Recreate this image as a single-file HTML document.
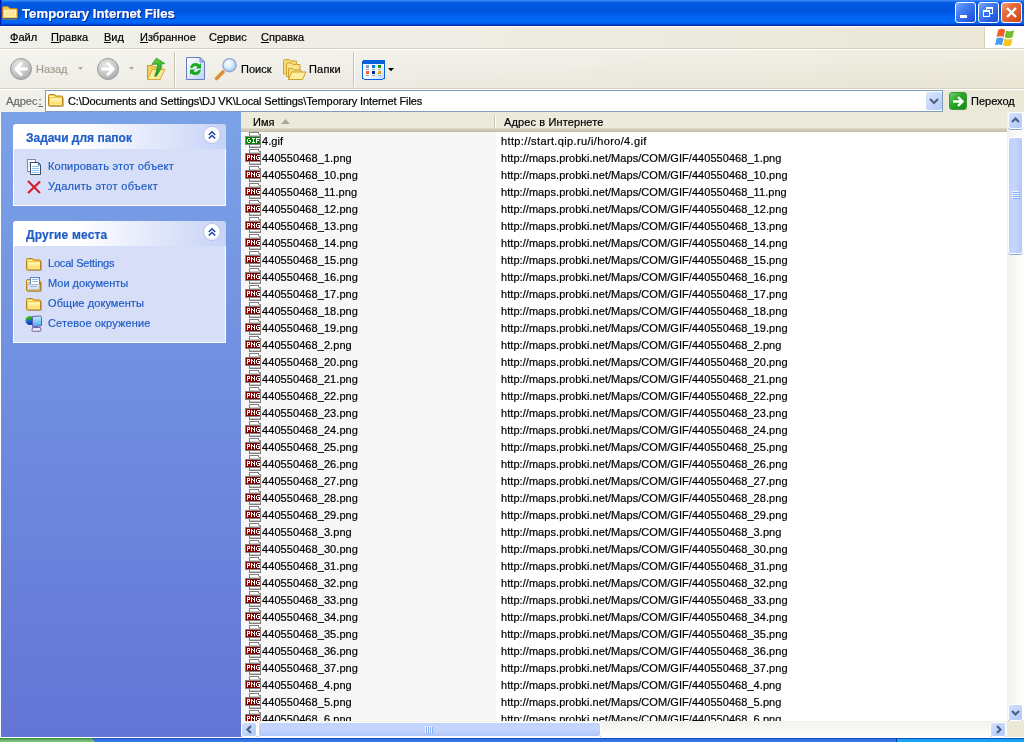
<!DOCTYPE html><html><head><meta charset="utf-8"><style>
*{margin:0;padding:0;box-sizing:border-box}
html,body{width:1024px;height:742px;overflow:hidden;background:#ece9d8;font-family:"Liberation Sans",sans-serif;font-size:11px;color:#000}
#root span{-webkit-text-stroke:0.2px currentColor}
#root{position:absolute;left:0;top:0;width:1024px;height:742px;will-change:transform}
.a{position:absolute;white-space:nowrap}
svg{position:absolute;overflow:visible}
#title{left:0;top:0;width:1024px;height:26px;background:linear-gradient(#3d8ef8 0,#2f84f4 1px,#0a62ea 2px,#0058e2 4px,#0055de 12px,#005ae8 14px,#0064f4 17px,#0068f8 21px,#0062f2 23px,#0050dc 24px,#0036b8 25px,#0030a8 26px)}
.tt{left:22px;top:6px;color:#fff;font-weight:bold;font-size:13.2px;text-shadow:1px 1px 0 #0a1e80}
.tb{top:2px;width:21px;height:21px;border:1px solid #fff;border-radius:3px;background:linear-gradient(135deg,#7aa8fa 0,#4a84f2 30%,#2c66e8 65%,#1a4cd4 100%)}
#close{background:linear-gradient(135deg,#f4a282 0,#e8703f 30%,#de5a28 65%,#c64614 100%)}
.hg{background:linear-gradient(90deg,#f1f0ea 0,#eeece3 50%,#ebe8d8 100%)}
#menu{left:0;top:26px;width:984px;height:22px}
#menu span{position:absolute;top:7px}
#menu u{text-decoration:none;display:inline-block;border-bottom:1px solid #000;line-height:10px;height:11px}
#winlogo{left:984px;top:26px;width:40px;height:23px;background:#fff;border-left:1px solid #d6d0be}
#toolbar{left:0;top:48px;width:1024px;height:41px}
#addr{left:0;top:88px;width:1024px;height:24px}
#addrbox{left:45px;top:90px;width:898px;height:22px;background:#fff;border:1px solid #7f9db9}
#left{left:0;top:112px;width:241px;height:625px;background:linear-gradient(#7ba2e7,#6375d6)}
.box{left:13px;width:213px;background:#d6dff7;border:1px solid #fff;border-top:none}
.boxh{left:13px;width:213px;height:25px;border-radius:3px 3px 0 0;background:linear-gradient(90deg,#fff 0,#fff 30%,#c6d3f7 100%)}
.boxh span{position:absolute;left:13px;top:7px;font-weight:bold;color:#215dc6;font-size:12px}
.chev{left:191px;top:3px;width:16px;height:16px;border-radius:50%;background:radial-gradient(circle at 45% 40%,#fff 50%,#eef1fa 70%,#d8ddf0 100%);box-shadow:0 0 0 1px #b8c2e2}
.lnk{color:#215dc6}
#list{left:241px;top:112px;width:766px;height:609px;background:#fff}
#sortcol{left:241px;top:131px;width:255px;height:590px;background:#f7f7f7}
#hdr{left:241px;top:112px;width:766px;height:20px;background:linear-gradient(#ebeadb 0,#ebeadb 16px,#dedbca 16px,#d6d2c0 17px,#cdc9b5 18px,#c5c1ac 19px,#c5c1ac 20px)}
#vsb{left:1007px;top:112px;width:17px;height:609px;background:linear-gradient(90deg,#f3f1ec,#fefefb)}
.sbtn{border:1px solid #fff;border-radius:3px;background:linear-gradient(135deg,#d4e0fd 0,#c2d4fc 50%,#b0c8f9 100%);box-shadow:0 1px 0 #8ca8dc}
.thumbv{border:1px solid #fff;border-radius:3px;box-shadow:0 1px 0 #8ca8dc}
#hsb{left:241px;top:721px;width:766px;height:16px;background:linear-gradient(#f3f1ec,#fefefb)}
</style></head><body><div id="root">
<svg width="0" height="0" style="left:0;top:0"><defs><linearGradient id="fgb" x1="0" y1="0" x2="0" y2="1"><stop offset="0" stop-color="#fff4b8"/><stop offset="1" stop-color="#f2c95a"/></linearGradient>
<linearGradient id="fgf" x1="0" y1="0" x2="0" y2="1"><stop offset="0" stop-color="#fff8c0"/><stop offset="1" stop-color="#fcd860"/></linearGradient>
<radialGradient id="gc" cx="0.4" cy="0.3" r="0.8"><stop offset="0" stop-color="#e6e6e6"/><stop offset="0.55" stop-color="#c8c8c8"/><stop offset="1" stop-color="#a2a2a2"/></radialGradient>
<linearGradient id="rp" x1="0" y1="0" x2="1" y2="1"><stop offset="0" stop-color="#fff"/><stop offset="1" stop-color="#bcd4f6"/></linearGradient>
<radialGradient id="mg" cx="0.4" cy="0.35" r="0.7"><stop offset="0" stop-color="#fff"/><stop offset="0.5" stop-color="#d6ecfc"/><stop offset="1" stop-color="#92c4ec"/></radialGradient>
<linearGradient id="vg" x1="0" y1="0" x2="1" y2="1"><stop offset="0" stop-color="#fff"/><stop offset="0.6" stop-color="#f2f7ff"/><stop offset="1" stop-color="#b8d6fa"/></linearGradient>
<linearGradient id="ga" x1="0" y1="0" x2="0" y2="1"><stop offset="0" stop-color="#5ccc3c"/><stop offset="1" stop-color="#1a9a1a"/></linearGradient><symbol id="gif" viewBox="0 0 16 16" shape-rendering="crispEdges"><rect x="4" y="0" width="10" height="1" fill="#808080"/><rect x="13" y="1" width="1" height="1" fill="#808080"/><rect x="14" y="2" width="1" height="1" fill="#808080"/><rect x="15" y="2" width="1" height="14" fill="#808080"/><rect x="4" y="15" width="12" height="1" fill="#808080"/><rect x="4" y="0" width="1" height="16" fill="#808080"/><rect x="5" y="1" width="8" height="3" fill="#fff"/><rect x="13" y="2" width="1" height="2" fill="#e0e0e0"/><rect x="14" y="3" width="1" height="1" fill="#c8c8c8"/><rect x="5" y="3" width="10" height="1" fill="#c8c8c8"/><rect x="5" y="13" width="10" height="1" fill="#fff"/><rect x="5" y="14" width="10" height="1" fill="#c8c8c8"/><rect x="0" y="4" width="16" height="9" fill="#868686"/><rect x="1" y="5" width="14" height="7" fill="#008000"/><rect x="3" y="6" width="1" height="1" fill="#fff"/><rect x="4" y="6" width="1" height="1" fill="#fff"/><rect x="2" y="7" width="1" height="1" fill="#fff"/><rect x="2" y="8" width="1" height="1" fill="#fff"/><rect x="4" y="8" width="1" height="1" fill="#fff"/><rect x="5" y="8" width="1" height="1" fill="#fff"/><rect x="2" y="9" width="1" height="1" fill="#fff"/><rect x="5" y="9" width="1" height="1" fill="#fff"/><rect x="3" y="10" width="1" height="1" fill="#fff"/><rect x="4" y="10" width="1" height="1" fill="#fff"/><rect x="7" y="6" width="1" height="1" fill="#fff"/><rect x="8" y="6" width="1" height="1" fill="#fff"/><rect x="9" y="6" width="1" height="1" fill="#fff"/><rect x="8" y="7" width="1" height="1" fill="#fff"/><rect x="8" y="8" width="1" height="1" fill="#fff"/><rect x="8" y="9" width="1" height="1" fill="#fff"/><rect x="7" y="10" width="1" height="1" fill="#fff"/><rect x="8" y="10" width="1" height="1" fill="#fff"/><rect x="9" y="10" width="1" height="1" fill="#fff"/><rect x="11" y="6" width="1" height="1" fill="#fff"/><rect x="12" y="6" width="1" height="1" fill="#fff"/><rect x="13" y="6" width="1" height="1" fill="#fff"/><rect x="14" y="6" width="1" height="1" fill="#fff"/><rect x="11" y="7" width="1" height="1" fill="#fff"/><rect x="11" y="8" width="1" height="1" fill="#fff"/><rect x="12" y="8" width="1" height="1" fill="#fff"/><rect x="13" y="8" width="1" height="1" fill="#fff"/><rect x="11" y="9" width="1" height="1" fill="#fff"/><rect x="11" y="10" width="1" height="1" fill="#fff"/></symbol><symbol id="png" viewBox="0 0 16 16" shape-rendering="crispEdges"><rect x="4" y="0" width="10" height="1" fill="#808080"/><rect x="13" y="1" width="1" height="1" fill="#808080"/><rect x="14" y="2" width="1" height="1" fill="#808080"/><rect x="15" y="2" width="1" height="14" fill="#808080"/><rect x="4" y="15" width="12" height="1" fill="#808080"/><rect x="4" y="0" width="1" height="16" fill="#808080"/><rect x="5" y="1" width="8" height="3" fill="#fff"/><rect x="13" y="2" width="1" height="2" fill="#e0e0e0"/><rect x="14" y="3" width="1" height="1" fill="#c8c8c8"/><rect x="5" y="3" width="10" height="1" fill="#c8c8c8"/><rect x="5" y="13" width="10" height="1" fill="#fff"/><rect x="5" y="14" width="10" height="1" fill="#c8c8c8"/><rect x="0" y="4" width="16" height="9" fill="#868686"/><rect x="1" y="5" width="14" height="7" fill="#800000"/><rect x="2" y="6" width="1" height="1" fill="#fff"/><rect x="3" y="6" width="1" height="1" fill="#fff"/><rect x="4" y="6" width="1" height="1" fill="#fff"/><rect x="2" y="7" width="1" height="1" fill="#fff"/><rect x="4" y="7" width="1" height="1" fill="#fff"/><rect x="2" y="8" width="1" height="1" fill="#fff"/><rect x="3" y="8" width="1" height="1" fill="#fff"/><rect x="4" y="8" width="1" height="1" fill="#fff"/><rect x="2" y="9" width="1" height="1" fill="#fff"/><rect x="2" y="10" width="1" height="1" fill="#fff"/><rect x="6" y="6" width="1" height="1" fill="#fff"/><rect x="9" y="6" width="1" height="1" fill="#fff"/><rect x="6" y="7" width="1" height="1" fill="#fff"/><rect x="7" y="7" width="1" height="1" fill="#fff"/><rect x="9" y="7" width="1" height="1" fill="#fff"/><rect x="6" y="8" width="1" height="1" fill="#fff"/><rect x="8" y="8" width="1" height="1" fill="#fff"/><rect x="9" y="8" width="1" height="1" fill="#fff"/><rect x="6" y="9" width="1" height="1" fill="#fff"/><rect x="9" y="9" width="1" height="1" fill="#fff"/><rect x="6" y="10" width="1" height="1" fill="#fff"/><rect x="9" y="10" width="1" height="1" fill="#fff"/><rect x="12" y="6" width="1" height="1" fill="#fff"/><rect x="13" y="6" width="1" height="1" fill="#fff"/><rect x="14" y="6" width="1" height="1" fill="#fff"/><rect x="11" y="7" width="1" height="1" fill="#fff"/><rect x="11" y="8" width="1" height="1" fill="#fff"/><rect x="13" y="8" width="1" height="1" fill="#fff"/><rect x="14" y="8" width="1" height="1" fill="#fff"/><rect x="11" y="9" width="1" height="1" fill="#fff"/><rect x="14" y="9" width="1" height="1" fill="#fff"/><rect x="12" y="10" width="1" height="1" fill="#fff"/><rect x="13" y="10" width="1" height="1" fill="#fff"/><rect x="14" y="10" width="1" height="1" fill="#fff"/></symbol></defs></svg>
<div id="title" class="a"></div>
<div class="a" style="left:0;top:0;width:1px;height:26px;background:#0018b8"></div><div class="a" style="left:1px;top:0;width:1px;height:26px;background:#0a48e0"></div>
<svg style="left:2px;top:6px" width="16" height="13" viewBox="0 0 16 13"><path d="M0.5 2 q0-1.5 1.5-1.5 h4 l2 2 h6 q1.5 0 1.5 1.5 v7.5 q0 1.5-1.5 1.5 h-12 q-1.5 0-1.5-1.5z" fill="#f3c658" stroke="#b88218"/><path d="M2.5 4.5 h11 v6 h-11z" fill="#fde69a" stroke="#fff6c8"/><path d="M1.5 12.5 h15 M16.5 4 v8.5" stroke="#062e9a" stroke-opacity="0.6"/></svg>
<span class="a tt">Temporary Internet Files</span>
<div class="a tb" style="left:955px"><div class="a" style="left:4px;top:12px;width:7px;height:3px;background:#fff"></div></div>
<div class="a tb" style="left:978px"><div class="a" style="left:7px;top:4px;width:7px;height:7px;border:1px solid #fff;border-top-width:2px"></div><div class="a" style="left:4px;top:7px;width:7px;height:7px;border:1px solid #fff;border-top-width:2px;background:#3a74ec"></div></div>
<div id="close" class="a tb" style="left:1001px"><svg style="left:4px;top:4px" width="11" height="11"><path d="M1 1L10 10M10 1L1 10" stroke="#fff" stroke-width="2.4"/></svg></div>
<div class="a" style="left:0;top:26px;width:1024px;height:1px;background:#fffdf2"></div>
<div id="menu" class="a hg" style="top:27px;height:21px">
<span style="left:10px;top:4px"><u>Ф</u>айл</span>
<span style="left:51px;top:4px"><u>П</u>равка</span>
<span style="left:104px;top:4px"><u>В</u>ид</span>
<span style="left:140px;top:4px"><u>И</u>збранное</span>
<span style="left:209px;top:4px">С<u>е</u>рвис</span>
<span style="left:261px;top:4px"><u>С</u>правка</span>
</div>
<div class="a" style="left:0;top:48px;width:1024px;height:1px;background:#d6d0be"></div>
<div id="winlogo" class="a" style="top:27px;height:21px"></div>
<svg style="left:996px;top:27.5px" width="20" height="18" viewBox="0 0 20 18"><path d="M2.2 1.8 q3.2-2 7 0 l-1.6 7.2 q-3.6-1.6-7 0z" fill="#f0602a"/><path d="M10.2 2.4 q4 2 8-0.4 l-1.6 7.2 q-3.8 2-8 0z" fill="#72c032"/><path d="M0.6 10.2 q3.6-1.6 7 0 l-1.6 7 q-3.6-1.6-7 0z" fill="#4c9cf0"/><path d="M8.6 10.6 q4 2 8 0 l-1.5 6.6 q-4 2-8 0z" fill="#f8c420"/></svg>
<div class="a" style="left:0;top:49px;width:1024px;height:1px;background:#fff"></div>
<div id="toolbar" class="a hg" style="top:50px;height:38px"><div class="a" style="left:0;top:0;width:1024px;height:38px;background:linear-gradient(rgba(255,255,255,.25),rgba(255,255,255,0) 60%,rgba(200,195,170,.08))"></div></div>
<div class="a" style="left:0;top:88px;width:1024px;height:1px;background:#d6d0be"></div>
<div class="a" style="left:0;top:89px;width:1024px;height:1px;background:#fff"></div>
<svg style="left:10px;top:58px" width="22" height="22" viewBox="0 0 22 22"><circle cx="11" cy="11" r="10.5" fill="url(#gc)" stroke="#9c9c9c"/><path d="M16.5 11H6M11.2 5.6L5.6 11l5.6 5.4" stroke="#fff" stroke-width="2.8" fill="none" stroke-linecap="round" stroke-linejoin="round"/></svg>
<span class="a" style="left:36px;top:63px;color:#a29f8e">Назад</span>
<svg style="left:78px;top:67px" width="5" height="3" viewBox="0 0 5 3"><path d="M0 0h5l-2.5 3z" fill="#aeab9a"/></svg>
<svg style="left:97px;top:58px" width="22" height="22" viewBox="0 0 22 22"><circle cx="11" cy="11" r="10.5" fill="url(#gc)" stroke="#9c9c9c"/><g transform="translate(22,0) scale(-1,1)"><path d="M16.5 11H6M11.2 5.6L5.6 11l5.6 5.4" stroke="#fff" stroke-width="2.8" fill="none" stroke-linecap="round" stroke-linejoin="round"/></g></svg>
<svg style="left:129px;top:67px" width="5" height="3" viewBox="0 0 5 3"><path d="M0 0h5l-2.5 3z" fill="#aeab9a"/></svg>
<svg style="left:146px;top:57px" width="20" height="24" viewBox="0 0 20 24"><path d="M1.5 8.5 h5 l1.5 1.5 h8 v3 L14 22.5 h-12.5z" fill="#f2d060" stroke="#d09a28"/><path d="M1.5 22.5 l4.8-10 h12.5 l-4.8 10z" fill="#fce99a" stroke="#d8a838"/>
<path d="M10.4 1 L18.8 6.6 L15.6 7 Q15.2 13.5 10.2 19.5 L8.6 19 Q11.4 13 11.6 7.2 L5.8 7.4 Z" fill="url(#ga)" stroke="#1a8a1a" stroke-width="0.6"/></svg>
<div class="a" style="left:174px;top:52px;width:1px;height:35px;background:#c8c4b0"></div><div class="a" style="left:175px;top:52px;width:1px;height:35px;background:#fff"></div>
<svg style="left:186px;top:57px" width="19" height="23" viewBox="0 0 19 23"><path d="M0.5 0.5 h13.5 l4.5 4.5 v17.5 h-18z" fill="url(#rp)" stroke="#6c7cc0"/><path d="M14 0.5 v4.5 h4.5z" fill="#a8c4f0" stroke="#6c7cc0" stroke-width="0.8"/>
<path d="M4.2 11 q0.6-5 5.6-5 q2.4 0 3.8 1.6 l1.4-1.4 v5.3 h-5.2 l1.6-1.6 q-0.8-1-1.9-1 q-2.4 0-3 2.1z" fill="#1aa820"/><path d="M14.8 13 q-0.6 5-5.6 5 q-2.4 0-3.8-1.6 l-1.4 1.4 v-5.3 h5.2 l-1.6 1.6 q0.8 1 1.9 1 q2.4 0 3-2.1z" fill="#1aa820"/></svg>
<svg style="left:214px;top:57px" width="24" height="24" viewBox="0 0 24 24"><path d="M2.5 21.5 l6.5-6.5" stroke="#e08c30" stroke-width="3.6" stroke-linecap="round"/><circle cx="15.5" cy="8.2" r="6.6" fill="url(#mg)" stroke="#98a4d4" stroke-width="1.4"/></svg>
<span class="a" style="left:241px;top:63px">Поиск</span>
<svg style="left:283px;top:59px" width="24" height="22" viewBox="0 0 24 22"><path d="M0.5 2.5 q0-2 2-2 h3.5 l1.5 1.5 h6 v13 h-13z" fill="#f6da78" stroke="#d0a030"/><path d="M3.5 5.5 q0-1.5 1.5-1.5 h3.5 l1.5 1.5 h7 v12 h-13.5z" fill="#f8e48c" stroke="#d0a030"/><path d="M5.5 9.5 h4 l1.5 1.5 h7 v9.5 h-12.5z" fill="#f6dc78" stroke="#d0a030"/><path d="M5.5 20.5 l3-7.5 h14.5 l-3.5 7.5z" fill="#fcee9e" stroke="#d0a030"/></svg>
<span class="a" style="left:309px;top:63px;letter-spacing:0.2px">Папки</span>
<div class="a" style="left:353px;top:52px;width:1px;height:35px;background:#c8c4b0"></div><div class="a" style="left:354px;top:52px;width:1px;height:35px;background:#fff"></div>
<svg style="left:362px;top:60px;shape-rendering:crispEdges" width="24" height="20" viewBox="0 0 24 20"><rect x="0.5" y="0.5" width="22" height="18.5" rx="1.5" fill="url(#vg)" stroke="#0a62d8"/><rect x="1" y="1" width="21" height="2.5" fill="#0a62d8"/>
<rect x="4" y="5" width="3" height="3" fill="#9090d0"/><rect x="10" y="5" width="3" height="3" fill="#0a78e8"/><rect x="16" y="5" width="3" height="3" fill="#0a9a14"/>
<rect x="4" y="11" width="3" height="3" fill="#ff6030"/><rect x="10" y="11" width="3" height="3" fill="#082a98"/><rect x="16" y="11" width="3" height="3" fill="#e0a010"/>
<path d="M4 9.5h3M10 9.5h3M16 9.5h3M4 15.5h3M10 15.5h3M16 15.5h3" stroke="#a8a8a8"/></svg>
<svg style="left:388px;top:68px" width="6" height="3" viewBox="0 0 6 3"><path d="M0 0h6l-3 3.2z" fill="#000"/></svg>
<div id="addr" class="a hg" style="top:90px;height:22px"></div>
<span class="a" style="left:6px;top:95px;color:#6a6a6a">Адрес<span style="border-bottom:1px solid #6a6a6a;display:inline-block;line-height:10px;height:11px;padding:0 1px">:</span></span>
<div id="addrbox" class="a"><span class="a" style="left:22px;top:4px;letter-spacing:-0.11px">C:\Documents and Settings\DJ VK\Local Settings\Temporary Internet Files</span>
<div class="a" style="left:880px;top:1px;width:16px;height:18px;border-radius:2px;background:linear-gradient(135deg,#dce7fe,#b4c9f8)"><svg style="left:3px;top:6px" width="10" height="6"><path d="M1 1l4 4l4-4" stroke="#4d6185" stroke-width="2.2" fill="none"/></svg></div></div>
<svg style="left:48px;top:94px" width="16" height="13" viewBox="0 0 16 13"><path d="M1.5 12.5 h14 M15.5 3.5 v9" stroke="#404878" stroke-opacity="0.35"/><path d="M0.5 1.5 q0-1 1-1 h5 l1.5 1.5 h5.5 q1 0 1 1 v8 q0 1-1 1 h-12 q-1 0-1-1z" fill="#f4c850" stroke="#b88418"/><path d="M1 2.5 h5" stroke="#fff4c0"/><rect x="2.5" y="4.5" width="11" height="6" fill="url(#fgf)" stroke="#fff0a0" stroke-width="0.8"/></svg>
<div class="a" style="left:949px;top:92px;width:18px;height:18px;border-radius:3px;background:linear-gradient(135deg,#78d078,#2aa82a 40%,#188818);border:1px solid #3a9a3a"><svg style="left:2px;top:2px" width="13" height="13"><path d="M1 6.5h8.5M6 2l4.5 4.5L6 11" stroke="#fff" stroke-width="2.4" fill="none"/></svg></div>
<span class="a" style="left:971px;top:95px">Переход</span>
<div id="left" class="a"></div>
<div class="a" style="left:0;top:112px;width:1px;height:625px;background:#fff"></div>
<div class="a boxh" style="top:124px"><span>Задачи для папок</span><div class="a chev"><svg style="left:4px;top:4px" width="8" height="8"><path d="M0.8 4l3.2-3.2 3.2 3.2M0.8 7.6l3.2-3.2 3.2 3.2" stroke="#1c3fa0" stroke-width="1.4" fill="none"/></svg></div></div>
<div class="a box" style="top:149px;height:57px"></div>
<svg style="left:27px;top:159px" width="14" height="16" viewBox="0 0 14 16"><rect x="0.5" y="0.5" width="8" height="12" fill="#f8fbff" stroke="#8a8a8a"/><path d="M1.5 3.5h5M1.5 5.5h5M1.5 7.5h5" stroke="#a0d0f0"/><path d="M3.5 3.5 h8 l2 2 v10 h-10z" fill="#fff" stroke="#404860"/><path d="M5 7.5h7M5 9.5h7M5 11.5h7M5 13.5h7" stroke="#8ac8f0"/><path d="M11 3.5 l3 3 h-3z" fill="#3a78d0"/></svg>
<span class="a lnk" style="left:48px;top:160px;letter-spacing:0.2px">Копировать этот объект</span>
<svg style="left:27px;top:180px" width="14" height="14" viewBox="0 0 14 14"><path d="M1.5 13.5L13.5 2" stroke="#602030" stroke-opacity=".2" stroke-width="1.5"/><path d="M1 1L13 13M13 1.5L1 13" stroke="#d81e2e" stroke-width="2.1"/></svg>
<span class="a lnk" style="left:48px;top:180px;letter-spacing:0.3px">Удалить этот объект</span>
<div class="a boxh" style="top:221px"><span style="letter-spacing:0.17px">Другие места</span><div class="a chev"><svg style="left:4px;top:4px" width="8" height="8"><path d="M0.8 4l3.2-3.2 3.2 3.2M0.8 7.6l3.2-3.2 3.2 3.2" stroke="#1c3fa0" stroke-width="1.4" fill="none"/></svg></div></div>
<div class="a box" style="top:246px;height:97px"></div>
<svg style="left:26px;top:258px" width="16" height="13" viewBox="0 0 16 13"><path d="M1.5 12.5 h14 M15.5 3.5 v9" stroke="#404878" stroke-opacity="0.35"/><path d="M0.5 1.5 q0-1 1-1 h5 l1.5 1.5 h5.5 q1 0 1 1 v8 q0 1-1 1 h-12 q-1 0-1-1z" fill="#f4c850" stroke="#b88418"/><path d="M1 2.5 h5" stroke="#fff4c0"/><rect x="2.5" y="4.5" width="11" height="6" fill="url(#fgf)" stroke="#fff0a0" stroke-width="0.8"/></svg>
<span class="a lnk" style="left:48px;top:257px;letter-spacing:-0.2px">Local Settings</span>
<svg style="left:26px;top:279px" width="16" height="13" viewBox="0 0 16 13"><path d="M1.5 12.5 h14 M15.5 3.5 v9" stroke="#404878" stroke-opacity="0.35"/><path d="M0.5 1.5 q0-1 1-1 h5 l1.5 1.5 h5.5 q1 0 1 1 v8 q0 1-1 1 h-12 q-1 0-1-1z" fill="#f4c850" stroke="#b88418"/><path d="M1 2.5 h5" stroke="#fff4c0"/><rect x="4.5" y="-1.5" width="9" height="7" fill="#fff" stroke="#5a80c8"/><path d="M6 0.5h6M6 2.5h6" stroke="#8ab8f0"/><path d="M11.5 -1.5 l2 2 v-2z" fill="#3a90f0"/><rect x="1.5" y="5.5" width="12" height="5" fill="#dde6ee" stroke="#b0bcc8"/><path d="M4 7.5h7" stroke="#8ab8f0"/></svg>
<span class="a lnk" style="left:48px;top:277px;letter-spacing:0px">Мои документы</span>
<svg style="left:26px;top:298px" width="16" height="13" viewBox="0 0 16 13"><path d="M1.5 12.5 h14 M15.5 3.5 v9" stroke="#404878" stroke-opacity="0.35"/><path d="M0.5 1.5 q0-1 1-1 h5 l1.5 1.5 h5.5 q1 0 1 1 v8 q0 1-1 1 h-12 q-1 0-1-1z" fill="#f4c850" stroke="#b88418"/><path d="M1 2.5 h5" stroke="#fff4c0"/><rect x="2.5" y="4.5" width="11" height="6" fill="url(#fgf)" stroke="#fff0a0" stroke-width="0.8"/></svg>
<span class="a lnk" style="left:48px;top:297px;letter-spacing:0.08px">Общие документы</span>
<svg style="left:26px;top:315px" width="16" height="17" viewBox="0 0 16 17"><defs><linearGradient id="glb" x1="0" y1="0" x2="0.3" y2="1"><stop offset="0" stop-color="#60d040"/><stop offset="0.45" stop-color="#20a020"/><stop offset="0.55" stop-color="#2070e0"/><stop offset="1" stop-color="#1030a0"/></linearGradient><linearGradient id="scr" x1="0" y1="0" x2="0" y2="1"><stop offset="0" stop-color="#c0f4ff"/><stop offset="1" stop-color="#40a8f0"/></linearGradient></defs><circle cx="4" cy="5.5" r="4.5" fill="url(#glb)"/><path d="M6.5 1.5 l7.5-0.5 q1.5 0 1.5 1.5 v8 l-8 1.5 q-1 0-1-1z" fill="url(#scr)" stroke="#6858a8"/><path d="M6.5 12.5 h8 l0.5 3 q0 0.8-1 0.8 h-7 q-1 0-1-0.8z" fill="#e8e8f0" stroke="#7868a8"/></svg>
<span class="a lnk" style="left:48px;top:317px;letter-spacing:0.14px">Сетевое окружение</span>
<div id="list" class="a"></div><div id="sortcol" class="a"></div>
<div id="hdr" class="a"><span class="a" style="left:12px;top:4px">Имя</span>
<svg style="left:40px;top:7px" width="9" height="5" viewBox="0 0 9 5"><path d="M0 5h9L4.5 0z" fill="#aca899"/></svg>
<div class="a" style="left:253px;top:3px;width:1px;height:13px;background:#cbc7b8"></div><div class="a" style="left:254px;top:3px;width:1px;height:13px;background:#fff"></div>
<span class="a" style="left:263px;top:4px;letter-spacing:0.12px">Адрес в Интернете</span></div>
<div class="a" style="left:241px;top:131px;width:766px;height:590px;overflow:hidden">
<svg style="left:4px;top:1px" width="16" height="16"><use href="#gif"/></svg><span class="a" style="left:21px;top:4px;letter-spacing:0.07px">4.gif</span><span class="a" style="left:260px;top:4px;letter-spacing:0.37px">http://start.qip.ru/i/horo/4.gif</span>
<svg style="left:4px;top:18px" width="16" height="16"><use href="#png"/></svg><span class="a" style="left:21px;top:21px;letter-spacing:0.07px">440550468_1.png</span><span class="a" style="left:260px;top:21px;letter-spacing:0.055px">http://maps.probki.net/Maps/COM/GIF/440550468_1.png</span>
<svg style="left:4px;top:35px" width="16" height="16"><use href="#png"/></svg><span class="a" style="left:21px;top:38px;letter-spacing:0.07px">440550468_10.png</span><span class="a" style="left:260px;top:38px;letter-spacing:0.055px">http://maps.probki.net/Maps/COM/GIF/440550468_10.png</span>
<svg style="left:4px;top:52px" width="16" height="16"><use href="#png"/></svg><span class="a" style="left:21px;top:55px;letter-spacing:0.07px">440550468_11.png</span><span class="a" style="left:260px;top:55px;letter-spacing:0.055px">http://maps.probki.net/Maps/COM/GIF/440550468_11.png</span>
<svg style="left:4px;top:69px" width="16" height="16"><use href="#png"/></svg><span class="a" style="left:21px;top:72px;letter-spacing:0.07px">440550468_12.png</span><span class="a" style="left:260px;top:72px;letter-spacing:0.055px">http://maps.probki.net/Maps/COM/GIF/440550468_12.png</span>
<svg style="left:4px;top:86px" width="16" height="16"><use href="#png"/></svg><span class="a" style="left:21px;top:89px;letter-spacing:0.07px">440550468_13.png</span><span class="a" style="left:260px;top:89px;letter-spacing:0.055px">http://maps.probki.net/Maps/COM/GIF/440550468_13.png</span>
<svg style="left:4px;top:103px" width="16" height="16"><use href="#png"/></svg><span class="a" style="left:21px;top:106px;letter-spacing:0.07px">440550468_14.png</span><span class="a" style="left:260px;top:106px;letter-spacing:0.055px">http://maps.probki.net/Maps/COM/GIF/440550468_14.png</span>
<svg style="left:4px;top:120px" width="16" height="16"><use href="#png"/></svg><span class="a" style="left:21px;top:123px;letter-spacing:0.07px">440550468_15.png</span><span class="a" style="left:260px;top:123px;letter-spacing:0.055px">http://maps.probki.net/Maps/COM/GIF/440550468_15.png</span>
<svg style="left:4px;top:137px" width="16" height="16"><use href="#png"/></svg><span class="a" style="left:21px;top:140px;letter-spacing:0.07px">440550468_16.png</span><span class="a" style="left:260px;top:140px;letter-spacing:0.055px">http://maps.probki.net/Maps/COM/GIF/440550468_16.png</span>
<svg style="left:4px;top:154px" width="16" height="16"><use href="#png"/></svg><span class="a" style="left:21px;top:157px;letter-spacing:0.07px">440550468_17.png</span><span class="a" style="left:260px;top:157px;letter-spacing:0.055px">http://maps.probki.net/Maps/COM/GIF/440550468_17.png</span>
<svg style="left:4px;top:171px" width="16" height="16"><use href="#png"/></svg><span class="a" style="left:21px;top:174px;letter-spacing:0.07px">440550468_18.png</span><span class="a" style="left:260px;top:174px;letter-spacing:0.055px">http://maps.probki.net/Maps/COM/GIF/440550468_18.png</span>
<svg style="left:4px;top:188px" width="16" height="16"><use href="#png"/></svg><span class="a" style="left:21px;top:191px;letter-spacing:0.07px">440550468_19.png</span><span class="a" style="left:260px;top:191px;letter-spacing:0.055px">http://maps.probki.net/Maps/COM/GIF/440550468_19.png</span>
<svg style="left:4px;top:205px" width="16" height="16"><use href="#png"/></svg><span class="a" style="left:21px;top:208px;letter-spacing:0.07px">440550468_2.png</span><span class="a" style="left:260px;top:208px;letter-spacing:0.055px">http://maps.probki.net/Maps/COM/GIF/440550468_2.png</span>
<svg style="left:4px;top:222px" width="16" height="16"><use href="#png"/></svg><span class="a" style="left:21px;top:225px;letter-spacing:0.07px">440550468_20.png</span><span class="a" style="left:260px;top:225px;letter-spacing:0.055px">http://maps.probki.net/Maps/COM/GIF/440550468_20.png</span>
<svg style="left:4px;top:239px" width="16" height="16"><use href="#png"/></svg><span class="a" style="left:21px;top:242px;letter-spacing:0.07px">440550468_21.png</span><span class="a" style="left:260px;top:242px;letter-spacing:0.055px">http://maps.probki.net/Maps/COM/GIF/440550468_21.png</span>
<svg style="left:4px;top:256px" width="16" height="16"><use href="#png"/></svg><span class="a" style="left:21px;top:259px;letter-spacing:0.07px">440550468_22.png</span><span class="a" style="left:260px;top:259px;letter-spacing:0.055px">http://maps.probki.net/Maps/COM/GIF/440550468_22.png</span>
<svg style="left:4px;top:273px" width="16" height="16"><use href="#png"/></svg><span class="a" style="left:21px;top:276px;letter-spacing:0.07px">440550468_23.png</span><span class="a" style="left:260px;top:276px;letter-spacing:0.055px">http://maps.probki.net/Maps/COM/GIF/440550468_23.png</span>
<svg style="left:4px;top:290px" width="16" height="16"><use href="#png"/></svg><span class="a" style="left:21px;top:293px;letter-spacing:0.07px">440550468_24.png</span><span class="a" style="left:260px;top:293px;letter-spacing:0.055px">http://maps.probki.net/Maps/COM/GIF/440550468_24.png</span>
<svg style="left:4px;top:307px" width="16" height="16"><use href="#png"/></svg><span class="a" style="left:21px;top:310px;letter-spacing:0.07px">440550468_25.png</span><span class="a" style="left:260px;top:310px;letter-spacing:0.055px">http://maps.probki.net/Maps/COM/GIF/440550468_25.png</span>
<svg style="left:4px;top:324px" width="16" height="16"><use href="#png"/></svg><span class="a" style="left:21px;top:327px;letter-spacing:0.07px">440550468_26.png</span><span class="a" style="left:260px;top:327px;letter-spacing:0.055px">http://maps.probki.net/Maps/COM/GIF/440550468_26.png</span>
<svg style="left:4px;top:341px" width="16" height="16"><use href="#png"/></svg><span class="a" style="left:21px;top:344px;letter-spacing:0.07px">440550468_27.png</span><span class="a" style="left:260px;top:344px;letter-spacing:0.055px">http://maps.probki.net/Maps/COM/GIF/440550468_27.png</span>
<svg style="left:4px;top:358px" width="16" height="16"><use href="#png"/></svg><span class="a" style="left:21px;top:361px;letter-spacing:0.07px">440550468_28.png</span><span class="a" style="left:260px;top:361px;letter-spacing:0.055px">http://maps.probki.net/Maps/COM/GIF/440550468_28.png</span>
<svg style="left:4px;top:375px" width="16" height="16"><use href="#png"/></svg><span class="a" style="left:21px;top:378px;letter-spacing:0.07px">440550468_29.png</span><span class="a" style="left:260px;top:378px;letter-spacing:0.055px">http://maps.probki.net/Maps/COM/GIF/440550468_29.png</span>
<svg style="left:4px;top:392px" width="16" height="16"><use href="#png"/></svg><span class="a" style="left:21px;top:395px;letter-spacing:0.07px">440550468_3.png</span><span class="a" style="left:260px;top:395px;letter-spacing:0.055px">http://maps.probki.net/Maps/COM/GIF/440550468_3.png</span>
<svg style="left:4px;top:409px" width="16" height="16"><use href="#png"/></svg><span class="a" style="left:21px;top:412px;letter-spacing:0.07px">440550468_30.png</span><span class="a" style="left:260px;top:412px;letter-spacing:0.055px">http://maps.probki.net/Maps/COM/GIF/440550468_30.png</span>
<svg style="left:4px;top:426px" width="16" height="16"><use href="#png"/></svg><span class="a" style="left:21px;top:429px;letter-spacing:0.07px">440550468_31.png</span><span class="a" style="left:260px;top:429px;letter-spacing:0.055px">http://maps.probki.net/Maps/COM/GIF/440550468_31.png</span>
<svg style="left:4px;top:443px" width="16" height="16"><use href="#png"/></svg><span class="a" style="left:21px;top:446px;letter-spacing:0.07px">440550468_32.png</span><span class="a" style="left:260px;top:446px;letter-spacing:0.055px">http://maps.probki.net/Maps/COM/GIF/440550468_32.png</span>
<svg style="left:4px;top:460px" width="16" height="16"><use href="#png"/></svg><span class="a" style="left:21px;top:463px;letter-spacing:0.07px">440550468_33.png</span><span class="a" style="left:260px;top:463px;letter-spacing:0.055px">http://maps.probki.net/Maps/COM/GIF/440550468_33.png</span>
<svg style="left:4px;top:477px" width="16" height="16"><use href="#png"/></svg><span class="a" style="left:21px;top:480px;letter-spacing:0.07px">440550468_34.png</span><span class="a" style="left:260px;top:480px;letter-spacing:0.055px">http://maps.probki.net/Maps/COM/GIF/440550468_34.png</span>
<svg style="left:4px;top:494px" width="16" height="16"><use href="#png"/></svg><span class="a" style="left:21px;top:497px;letter-spacing:0.07px">440550468_35.png</span><span class="a" style="left:260px;top:497px;letter-spacing:0.055px">http://maps.probki.net/Maps/COM/GIF/440550468_35.png</span>
<svg style="left:4px;top:511px" width="16" height="16"><use href="#png"/></svg><span class="a" style="left:21px;top:514px;letter-spacing:0.07px">440550468_36.png</span><span class="a" style="left:260px;top:514px;letter-spacing:0.055px">http://maps.probki.net/Maps/COM/GIF/440550468_36.png</span>
<svg style="left:4px;top:528px" width="16" height="16"><use href="#png"/></svg><span class="a" style="left:21px;top:531px;letter-spacing:0.07px">440550468_37.png</span><span class="a" style="left:260px;top:531px;letter-spacing:0.055px">http://maps.probki.net/Maps/COM/GIF/440550468_37.png</span>
<svg style="left:4px;top:545px" width="16" height="16"><use href="#png"/></svg><span class="a" style="left:21px;top:548px;letter-spacing:0.07px">440550468_4.png</span><span class="a" style="left:260px;top:548px;letter-spacing:0.055px">http://maps.probki.net/Maps/COM/GIF/440550468_4.png</span>
<svg style="left:4px;top:562px" width="16" height="16"><use href="#png"/></svg><span class="a" style="left:21px;top:565px;letter-spacing:0.07px">440550468_5.png</span><span class="a" style="left:260px;top:565px;letter-spacing:0.055px">http://maps.probki.net/Maps/COM/GIF/440550468_5.png</span>
<svg style="left:4px;top:579px" width="16" height="16"><use href="#png"/></svg><span class="a" style="left:21px;top:582px;letter-spacing:0.07px">440550468_6.png</span><span class="a" style="left:260px;top:582px;letter-spacing:0.055px">http://maps.probki.net/Maps/COM/GIF/440550468_6.png</span>
</div>
<div id="vsb" class="a"></div>
<div class="a sbtn" style="left:1008px;top:112px;width:15px;height:17px"><svg style="left:2px;top:4px" width="9" height="6"><path d="M1 5l3.5-3.5L8 5" stroke="#4d6185" stroke-width="2.2" fill="none"/></svg></div>
<div class="a thumbv" style="left:1008px;top:137px;width:15px;height:117px;background:linear-gradient(90deg,#c0d2fc,#c6d6fd 45%,#b0c8fa)"><svg style="left:3px;top:53px" width="8" height="8" shape-rendering="crispEdges"><path d="M0 0.5h7M0 2.5h7M0 4.5h7M0 6.5h7" stroke="#eef3fe"/><path d="M1 1.5h7M1 3.5h7M1 5.5h7M1 7.5h7" stroke="#8cb0f8"/></svg></div>
<div class="a sbtn" style="left:1008px;top:704px;width:15px;height:17px"><svg style="left:2px;top:5px" width="9" height="6"><path d="M1 1l3.5 3.5L8 1" stroke="#4d6185" stroke-width="2.2" fill="none"/></svg></div>
<div id="hsb" class="a"></div>
<div class="a" style="left:1007px;top:721px;width:17px;height:16px;background:#ece9d8"></div>
<div class="a sbtn" style="left:241px;top:722px;width:16px;height:15px"><svg style="left:4px;top:2px" width="6" height="9"><path d="M5 1L1.5 4.5L5 8" stroke="#4d6185" stroke-width="2.2" fill="none"/></svg></div>
<div class="a thumbv" style="left:258px;top:722px;width:343px;height:15px;background:linear-gradient(#c0d2fc,#c6d6fd 45%,#b0c8fa)"><svg style="left:166px;top:3px" width="8" height="8" shape-rendering="crispEdges"><path d="M0.5 0v7M2.5 0v7M4.5 0v7M6.5 0v7" stroke="#eef3fe"/><path d="M1.5 1v7M3.5 1v7M5.5 1v7M7.5 1v7" stroke="#8cb0f8"/></svg></div>
<div class="a sbtn" style="left:990px;top:722px;width:16px;height:15px"><svg style="left:5px;top:2px" width="6" height="9"><path d="M1 1L4.5 4.5L1 8" stroke="#4d6185" stroke-width="2.2" fill="none"/></svg></div>
<div class="a" style="left:0;top:737px;width:1024px;height:1px;background:#fff"></div>
<div class="a" style="left:0;top:738px;width:1024px;height:4px;background:linear-gradient(#1c4ec8 0,#1c4ec8 1px,#2e6ee0 1px,#3a7eea 4px)"></div>
<div class="a" style="left:896px;top:738px;width:128px;height:4px;background:linear-gradient(#1050c0 0,#1050c0 1px,#18a0ee 1px,#14a8f4 4px);border-left:1px solid #0a3a98"></div>
<svg style="left:0;top:738px" width="96" height="4"><defs><linearGradient id="sb" x1="0" y1="0" x2="0" y2="1"><stop offset="0" stop-color="#2f8a2f"/><stop offset="0.5" stop-color="#6cb46c"/><stop offset="1" stop-color="#84c484"/></linearGradient></defs><path d="M0 0H92L95 4H0z" fill="url(#sb)"/></svg>
</div></body></html>
